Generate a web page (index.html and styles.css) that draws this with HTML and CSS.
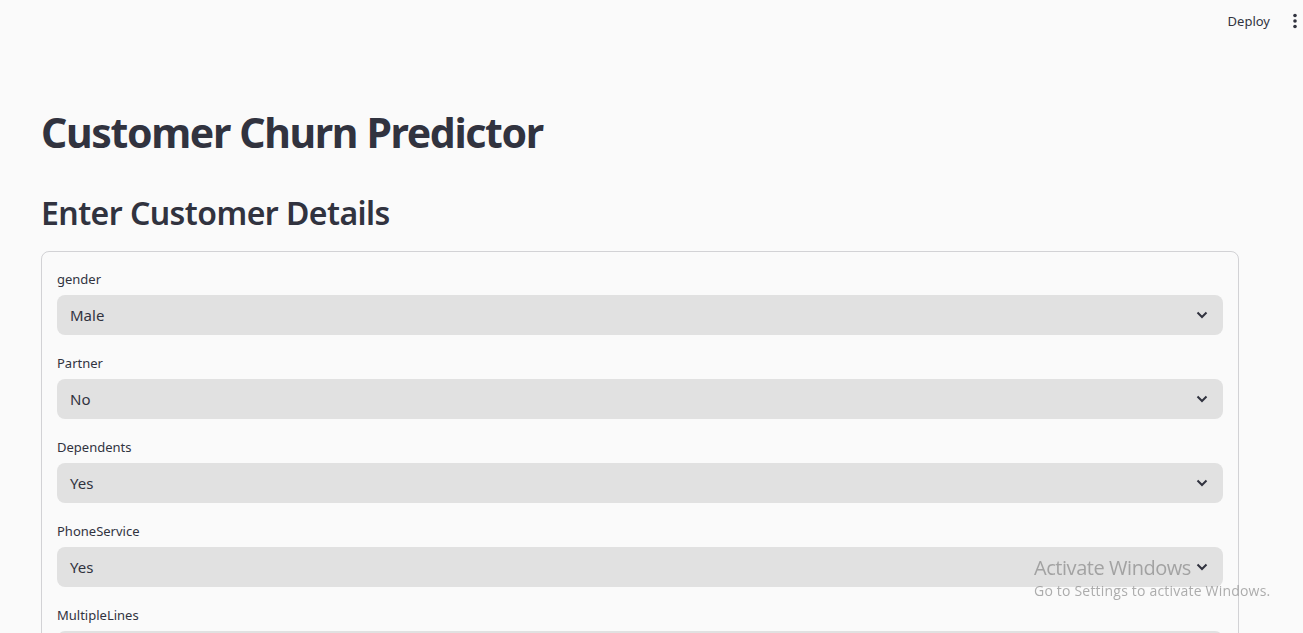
FILE: index.html
```html
<!DOCTYPE html>
<html lang="en">
<head>
<meta charset="utf-8">
<title>Customer Churn Predictor</title>
<link rel="stylesheet" href="styles.css">
</head>
<body>
<header class="topbar">
  <span class="deploy">Deploy</span>
  <span class="kebab" aria-label="menu">
    <svg width="4" height="16" viewBox="0 0 4 16"><circle cx="2" cy="2.5" r="1.8" fill="#31333f"/><circle cx="2" cy="8" r="1.8" fill="#31333f"/><circle cx="2" cy="13.5" r="1.8" fill="#31333f"/></svg>
  </span>
</header>
<main class="main">
  <h1 class="title">Customer Churn Predictor</h1>
  <h2 class="subtitle">Enter Customer Details</h2>
  <section class="form-box">
    <div class="field">
      <label class="label">gender</label>
      <div class="select"><span>Male</span><svg class="chev" width="12" height="8" viewBox="0 0 12 8"><path d="M1.5 1.5 L6 6 L10.5 1.5" fill="none" stroke="#31333f" stroke-width="2"/></svg></div>
    </div>
    <div class="field">
      <label class="label">Partner</label>
      <div class="select"><span>No</span><svg class="chev" width="12" height="8" viewBox="0 0 12 8"><path d="M1.5 1.5 L6 6 L10.5 1.5" fill="none" stroke="#31333f" stroke-width="2"/></svg></div>
    </div>
    <div class="field">
      <label class="label">Dependents</label>
      <div class="select"><span>Yes</span><svg class="chev" width="12" height="8" viewBox="0 0 12 8"><path d="M1.5 1.5 L6 6 L10.5 1.5" fill="none" stroke="#31333f" stroke-width="2"/></svg></div>
    </div>
    <div class="field">
      <label class="label">PhoneService</label>
      <div class="select"><span>Yes</span><svg class="chev" width="12" height="8" viewBox="0 0 12 8"><path d="M1.5 1.5 L6 6 L10.5 1.5" fill="none" stroke="#31333f" stroke-width="2"/></svg></div>
    </div>
    <div class="field">
      <label class="label">MultipleLines</label>
      <div class="select"><span>No</span><svg class="chev" width="12" height="8" viewBox="0 0 12 8"><path d="M1.5 1.5 L6 6 L10.5 1.5" fill="none" stroke="#31333f" stroke-width="2"/></svg></div>
    </div>
  </section>
</main>
<div class="watermark">
  <div class="wm-title">Activate Windows</div>
  <div class="wm-sub">Go to Settings to activate Windows.</div>
</div>
</body>
</html>
```
FILE: styles.css
```css
html, body {
  margin: 0;
  padding: 0;
  height: 100%;
  overflow: hidden;
}
body {
  background: #fafafa;
  color: #31333f;
  font-family: "Noto Sans", "Open Sans", sans-serif;
}
.topbar {
  height: 42px;
  display: flex;
  align-items: center;
  justify-content: flex-end;
  gap: 23px;
  padding-right: 6px;
}
.deploy {
  font-size: 13px;
  color: #31333f;
}
.kebab {
  display: flex;
  align-items: center;
  width: 4px;
  height: 16px;
}
.main {
  padding: 60px 64px 0 41px;
}
.title {
  margin: 0;
  font-size: 41px;
  font-weight: 700;
  line-height: 1.2;
  letter-spacing: -1.35px;
  padding-top: 6px;
}
.subtitle {
  margin: 37px 0 0 0;
  font-size: 32px;
  font-weight: 600;
  line-height: 1.2;
  letter-spacing: -0.55px;
}
.form-box {
  margin-top: 18px;
  border: 1px solid rgba(49, 51, 63, 0.2);
  border-radius: 8px;
  padding: 18px 15px 0 15px;
  display: flex;
  flex-direction: column;
  gap: 19px;
}
.field {
  display: flex;
  flex-direction: column;
  gap: 6px;
}
.label {
  font-size: 13px;
  line-height: 19px;
  color: #31333f;
}
.select {
  height: 40px;
  background: #e1e1e1;
  border-radius: 8px;
  display: flex;
  align-items: center;
  justify-content: space-between;
  padding: 0 15px 0 13px;
  font-size: 15px;
  color: #31333f;
}
.chev {
  display: block;
}
.watermark {
  position: fixed;
  left: 1034px;
  top: 555px;
  color: rgba(120, 120, 120, 0.6);
  font-family: "Open Sans", "Noto Sans", sans-serif;
  pointer-events: none;
}
.wm-title {
  font-size: 20px;
  line-height: 26px;
  letter-spacing: -0.45px;
}
.wm-sub {
  font-size: 14px;
  line-height: 20px;
  letter-spacing: 0.2px;
}
```
